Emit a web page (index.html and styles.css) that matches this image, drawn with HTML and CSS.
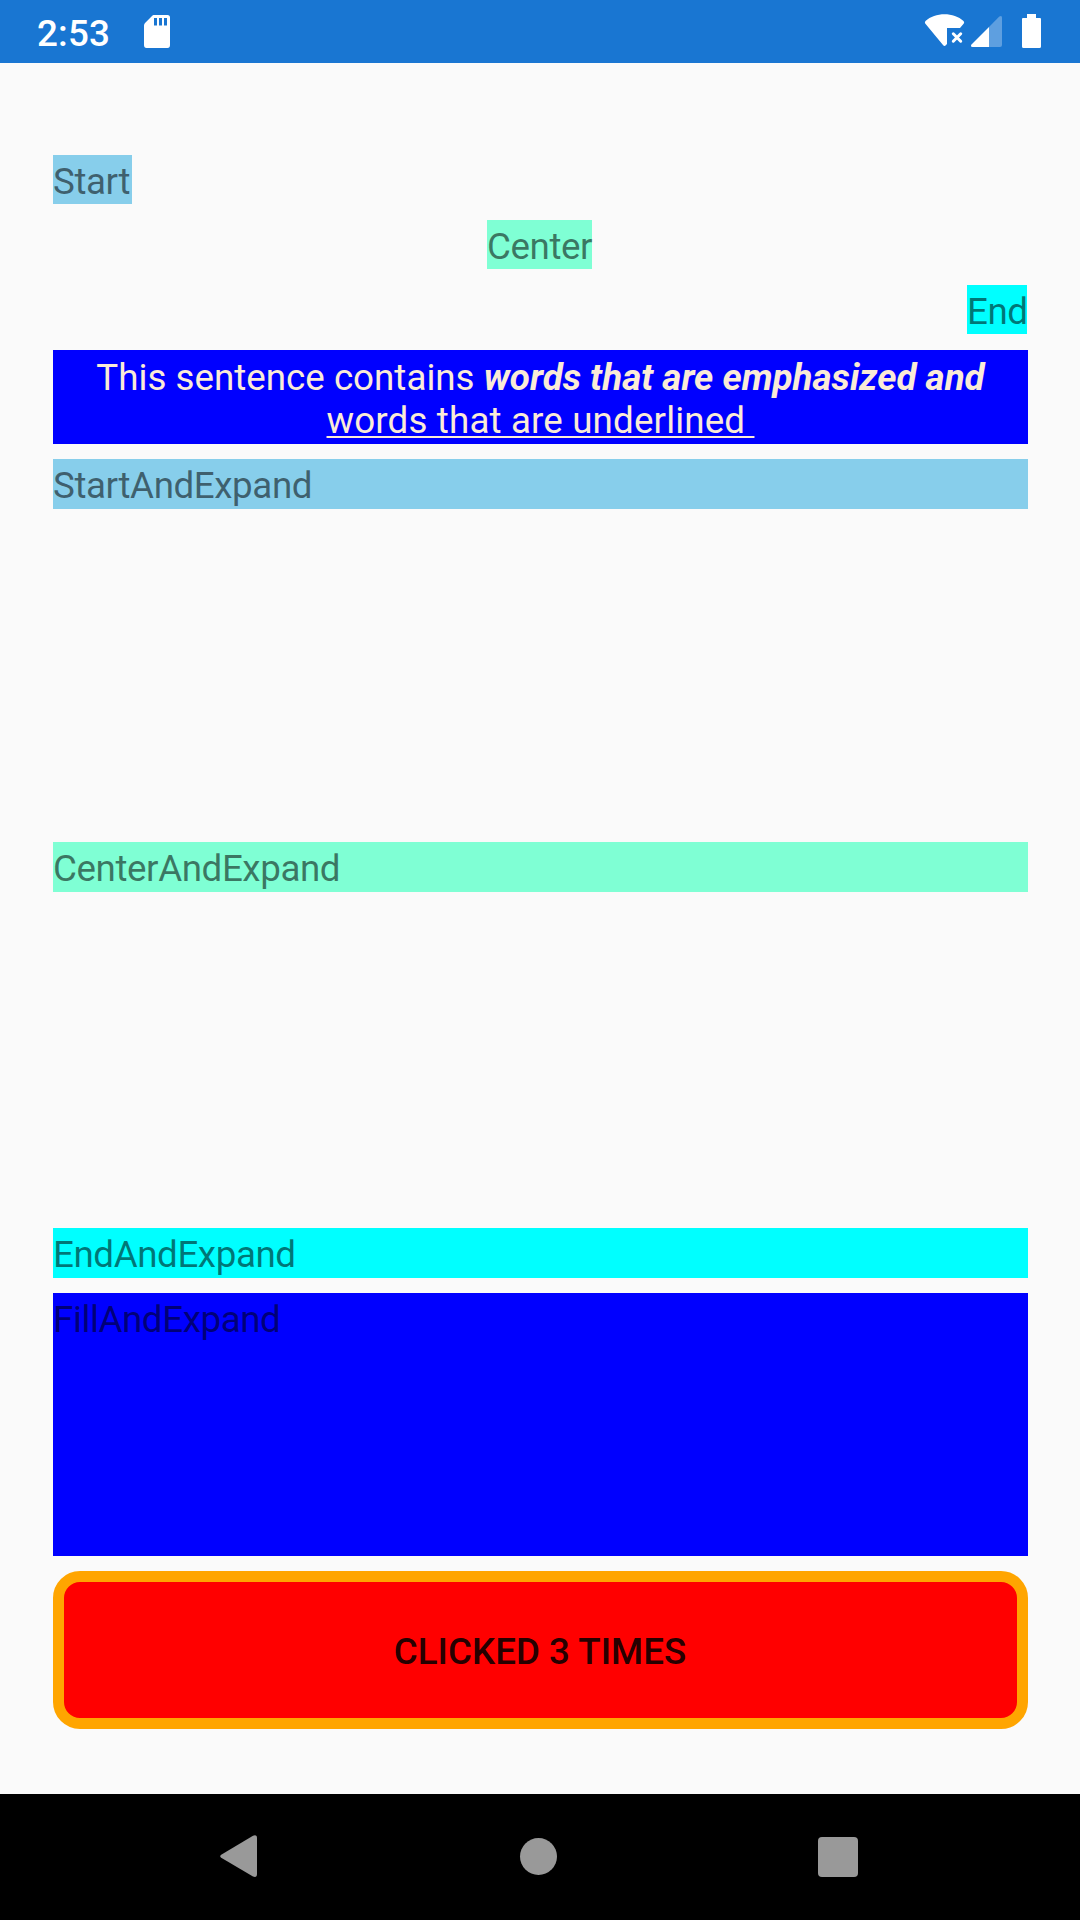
FILE: index.html
```
<!DOCTYPE html>
<html lang="en">
<head>
<meta charset="utf-8">
<title>Layout options</title>
<link rel="stylesheet" href="styles.css">
</head>
<body>
<header class="status">
  <span class="clock">2:53</span>
  <svg class="sd" width="26" height="33" viewBox="0 0 26 33"><path fill="#fff" fill-rule="evenodd" d="M9.5 0H23.5Q26 0 26 2.5V30Q26 33 23.500 33H2.500Q0 33 0 30V10.500Q0 9 1 8L8 1Q9 0 9.500 0ZM10 3V10.500H13V3ZM15 3V10.500H18V3ZM20 3V10.500H23V3Z"/></svg>
  <svg class="signals" width="120" height="40" viewBox="922 10 120 40">
    <path fill="#fff" d="M925.500 21C935 12 954 12 963.500 21Q964.700 22.300 963.800 23.500L960 28H947V44L946 45Q944.500 46.800 943 45L925.200 23.500Q924.400 22 925.500 21Z"/>
    <path stroke="#fff" stroke-width="3" stroke-linecap="round" d="M953.300 33.800L960.700 41.200M960.700 33.800L953.300 41.200"/>
    <path fill="#5e9fe0" d="M989 27L999.300 16.500Q1002 15 1002 17.500V45Q1002 47 1000 47H989Z"/>
    <path fill="#fff" d="M989 27V47H972.500Q970 46.500 971.500 44.500Z"/>
    <path fill="#fff" d="M1027 14H1036V18H1040Q1041 18 1041 19V46.500Q1041 48 1039.500 48H1023.500Q1022 48 1022 46.500V19Q1022 18 1023 18H1027Z"/>
  </svg>
</header>
<main class="stack">
  <div class="label sky start">Start</div>
  <div class="label aqua-green center">Center</div>
  <div class="label cyan end">End</div>
  <p class="sentence">This sentence contains <b><i>words that are emphasized and</i></b><br><span class="underlined">words that are underlined&nbsp;</span></p>
  <div class="bar sky">StartAndExpand</div>
  <div class="bar aqua-green middle">CenterAndExpand</div>
  <div class="bar cyan bottom">EndAndExpand</div>
  <div class="bar blue fill">FillAndExpand</div>
  <button class="counter">CLICKED 3 TIMES</button>
</main>
<nav class="nav">
  <svg width="38" height="44" viewBox="0 0 38 44"><path fill="#999" d="M1.200 19.700L33 .700Q37 -.800 37 3V39Q37 43 33 41.600L1.200 22.700Q-.800 21.200 1.200 19.700Z"/></svg>
  <svg width="38" height="38" viewBox="-1.500 0 38 38"><circle cx="18" cy="18.500" r="18.500" fill="#999"/></svg>
  <svg width="40" height="40" viewBox="0 0 40 40"><rect width="40" height="40" rx="4" fill="#999"/></svg>
</nav>
</body>
</html>
```
FILE: styles.css
```
* { box-sizing: border-box; }
body {
  margin: 0;
  width: 1080px;
  height: 1920px;
  display: grid;
  grid-template-rows: 63px 1731px 126px;
  background: #fafafa;
  font-family: Roboto, sans-serif;
  font-size: 36.75px;
  line-height: 43px;
}
.status {
  display: flex;
  align-items: flex-start;
  background: #1976d2;
  padding: 0 38px 0 37px;
}
.clock {
  color: #fff;
  font-weight: 500;
  letter-spacing: .2px;
  width: 107px;
  padding-top: 12px;
}
.sd { margin-top: 15px; }
.signals { margin: 10px 0 0 auto; }
.stack {
  display: grid;
  grid-template-rows: 50px 50px 50px 94px 263px 260px 266px 263px 158px;
  row-gap: 15px;
  padding: 92px 52px 0 53px;
}
.label, .bar {
  color: rgba(0, 0, 0, .54);
  padding-top: 5px;
  white-space: nowrap;
  align-self: start;
  letter-spacing: -.42px;
}
.label { height: 49px; }
.bar { height: 50px; }
.start { width: 79px; }
.center { width: 105px; justify-self: center; margin-right: 2px; }
.end { width: 60px; justify-self: end; margin-right: 1px; }
.sky { background: #87ceeb; }
.aqua-green { background: #7fffd4; }
.cyan { background: #00ffff; }
.blue { background: #0000ff; }
.middle { align-self: center; }
.bottom { align-self: end; }
.fill { height: 263px; }
.sentence {
  margin: 0;
  padding-top: 6px;
  background: #0000ff;
  color: #faebd7;
  text-align: center;
  white-space: nowrap;
}
.underlined {
  letter-spacing: .14px;
  text-decoration: underline;
  text-decoration-thickness: 2px;
  text-underline-offset: 3px;
}
.counter {
  border: 11px solid #ffa500;
  border-radius: 27px;
  background: #ff0000;
  color: rgba(0, 0, 0, .87);
  font: 500 36.75px/43px Roboto, sans-serif;
  padding: 2px 1px 0 0;
}
.nav {
  display: flex;
  align-items: center;
  background: #000;
  padding: 0 222px 0 220px;
  justify-content: space-between;
}
```
